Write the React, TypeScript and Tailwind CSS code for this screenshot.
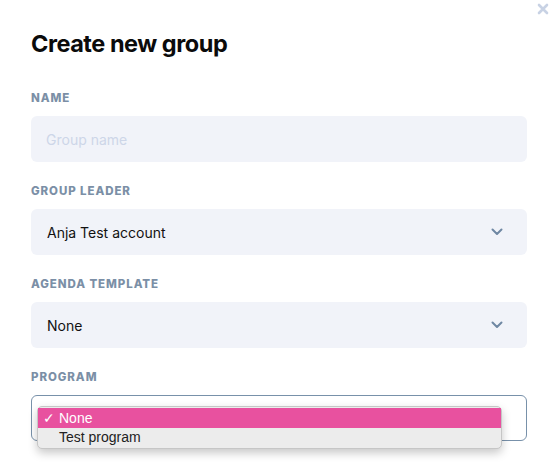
import React from "react";

function Chevron() {
  return (
    <svg width="12" height="8" viewBox="0 0 12 8" fill="none" className="shrink-0">
      <path d="M1.5 1.5 L6 6 L10.5 1.5" stroke="#6f87a3" strokeWidth="2" strokeLinecap="round" strokeLinejoin="round" />
    </svg>
  );
}

function Label({ children }: { children: React.ReactNode }) {
  return (
    <div className="h-4 text-[11.5px] leading-4 font-extrabold tracking-[0.08em] text-[#7b8fa6] uppercase">
      {children}
    </div>
  );
}

function SelectBox({ value }: { value: string }) {
  return (
    <div className="mt-[10px] flex h-[46px] items-center justify-between rounded-[6px] bg-[#f1f3f9] pl-4 pr-[24px]">
      <span className="text-[14px] text-[#111]">{value}</span>
      <Chevron />
    </div>
  );
}

export default function App() {
  return (
    <div
      className="relative h-[464px] w-[554px] overflow-hidden bg-white"
      style={{ fontFamily: "Inter, 'Noto Sans', sans-serif" }}
    >
      <button className="absolute right-[5px] top-[3px] text-[#c5d0e3]">
        <svg width="12" height="12" viewBox="0 0 12 12">
          <path d="M2 2 L10 10 M10 2 L2 10" stroke="#c8d2e4" strokeWidth="2.6" strokeLinecap="round" />
        </svg>
      </button>
      <div className="pl-[31px] pr-[27px] pt-[29px]">
        <h1 className="text-[23.5px] leading-[30px] font-bold text-[#0b0b0b] tracking-[-0.02em]">Create new group</h1>

        <div className="mt-[31px]">
          <Label>Name</Label>
          <div className="mt-[10px] flex h-[46px] items-center rounded-[6px] bg-[#f1f3f9] pl-[15px]">
            <span className="text-[14px] text-[#cdd6e8]">Group name</span>
          </div>
        </div>

        <div className="mt-[21px]">
          <Label>Group leader</Label>
          <SelectBox value="Anja Test account" />
        </div>

        <div className="mt-[21px]">
          <Label>Agenda template</Label>
          <SelectBox value="None" />
        </div>

        <div className="mt-[21px]">
          <Label>Program</Label>
          <div className="relative mt-[10px] flex h-[46px] items-center justify-between rounded-[6px] border border-[#7891aa] bg-white pl-4 pr-[24px]">
            <span className="invisible text-[14px] text-[#111]">None</span>
            <Chevron />
            <div
              className="absolute left-[5px] top-[10px] w-[465px] rounded-[5px] border border-[#c6c6c6] bg-[#ececec] py-[1px] shadow-[0_4px_10px_rgba(0,0,0,0.22)]"
              style={{ fontFamily: "'Liberation Sans', Arial, sans-serif" }}
            >
              <div className="flex h-[20px] items-center bg-[#e8519f] text-[14px] text-white">
                <span className="ml-[5px] mr-[2px] w-[14px] overflow-hidden text-[14px] leading-none">✓</span>
                <span>None</span>
              </div>
              <div className="flex h-[19px] items-center pl-[21px] text-[14px] text-[#222]">
                <span>Test program</span>
              </div>
            </div>
          </div>
        </div>
      </div>
    </div>
  );
}
